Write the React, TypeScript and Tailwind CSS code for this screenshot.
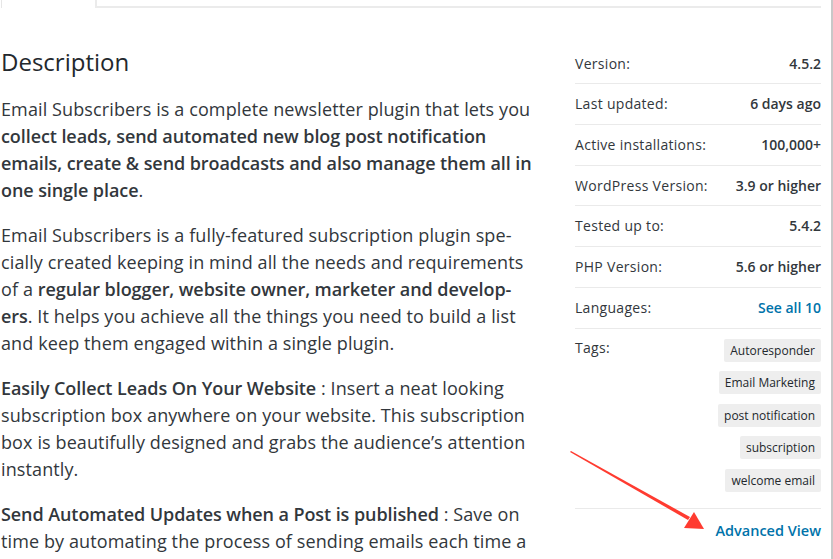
import React from "react";

const rows: { label: string; value: string; link?: boolean }[] = [
  { label: "Version:", value: "4.5.2" },
  { label: "Last updated:", value: "6 days ago" },
  { label: "Active installations:", value: "100,000+" },
  { label: "WordPress Version:", value: "3.9 or higher" },
  { label: "Tested up to:", value: "5.4.2" },
  { label: "PHP Version:", value: "5.6 or higher" },
  { label: "Languages:", value: "See all 10", link: true },
];

const tags = ["Autoresponder", "Email Marketing", "post notification", "subscription", "welcome email"];

function B({ children }: { children: React.ReactNode }) {
  return <b className="font-semibold tracking-[-0.08px]">{children}</b>;
}

export default function App() {
  return (
    <div
      className="relative w-[833px] h-[559px] overflow-hidden bg-white text-[#32373c]"
      style={{ fontFamily: '"Open Sans", "Noto Sans", sans-serif' }}
    >
      {/* top tabs strip */}
      <div className="flex h-[8px] w-[821px]">
        <div className="w-[95px] h-full flex">
          <div className="ml-[1px] w-[1px] h-full bg-[#e6e6e6]" />
        </div>
        <div className="flex-1 h-full border-l-[2px] border-b-[2px] border-[#ebebeb]" />
      </div>

      <div className="flex">
        {/* left column */}
        <div className="w-[575px] pl-[1px]">
          <h2 className="mt-[39px] text-[24px] leading-[30px] font-normal text-[#23282d]">Description</h2>
          <div className="mt-[19px] text-[18px] leading-[27px] whitespace-nowrap tracking-[0.11px]">
            <p>
              Email Subscribers is a complete newsletter plugin that lets you
              <br />
              <B>
                collect leads, send automated new blog post notification
                <br />
                emails, create &amp; send broadcasts and also manage them all in
                <br />
                one single place
              </B>
              .
            </p>
            <p className="mt-[18px]">
              Email Subscribers is a fully-featured subscription plugin spe-
              <br />
              cially created keeping in mind all the needs and requirements
              <br />
              of a <B>regular blogger, website owner, marketer and develop-</B>
              <br />
              <B>ers</B>. It helps you achieve all the things you need to build a list
              <br />
              and keep them engaged within a single plugin.
            </p>
            <p className="mt-[18px]">
              <B>Easily Collect Leads On Your Website</B> : Insert a neat looking
              <br />
              subscription box anywhere on your website. This subscription
              <br />
              box is beautifully designed and grabs the audience’s attention
              <br />
              instantly.
            </p>
            <p className="mt-[18px]">
              <B>Send Automated Updates when a Post is published</B> : Save on
              <br />
              time by automating the process of sending emails each time a
            </p>
          </div>
        </div>

        {/* sidebar */}
        <div className="w-[246px] pt-[35.6px] text-[14px]">
          {rows.map((r) => (
            <div
              key={r.label}
              className="flex justify-between items-center py-[10px] leading-[19.7px] border-b border-[#eaeaea]"
            >
              <span className="tracking-[0.3px]">{r.label}</span>
              <span className={r.link ? "font-semibold text-[#0073aa]" : "font-semibold"}>{r.value}</span>
            </div>
          ))}
          <div className="flex justify-between items-start pt-[10px] pb-[16px] border-b border-[#eaeaea]">
            <span className="leading-[19.7px] -mt-[1px] tracking-[0.3px]">Tags:</span>
            <div className="flex flex-col items-end gap-[9.5px]">
              {tags.map((t) => (
                <span
                  key={t}
                  className="bg-[#eeeeee] rounded-[2px] px-[6px] text-[12px] leading-[23px] text-[#23282d]"
                >
                  {t}
                </span>
              ))}
            </div>
          </div>
          <div className="flex justify-end pt-[11px] leading-[21px]">
            <span className="text-[14.5px] font-semibold text-[#0073aa]">Advanced View</span>
          </div>
        </div>
      </div>

      {/* scrollbar edge */}
      <div className="absolute right-0 top-0 w-[2px] h-full bg-[#c8c8c8]" />

      {/* red annotation arrow */}
      <svg className="absolute left-0 top-0 pointer-events-none" width="833" height="559">
        <polygon points="570,452 571,451 690,517 688,520" fill="#ff3b30" />
        <polygon points="684,528 694,512 704,529" fill="#ff3b30" />
      </svg>
    </div>
  );
}
